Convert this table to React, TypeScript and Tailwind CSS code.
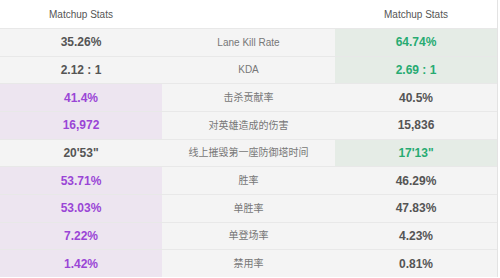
type Side = "left" | "right" | null;

type Row = {
  left: string;
  label: string;
  right: string;
  win: Side;
  kind: "purple" | "green";
};

const rows: Row[] = [
  { left: "35.26%", label: "Lane Kill Rate", right: "64.74%", win: "right", kind: "green" },
  { left: "2.12 : 1", label: "KDA", right: "2.69 : 1", win: "right", kind: "green" },
  { left: "41.4%", label: "击杀贡献率", right: "40.5%", win: "left", kind: "purple" },
  { left: "16,972", label: "对英雄造成的伤害", right: "15,836", win: "left", kind: "purple" },
  { left: "20'53\"", label: "线上摧毁第一座防御塔时间", right: "17'13\"", win: "right", kind: "green" },
  { left: "53.71%", label: "胜率", right: "46.29%", win: "left", kind: "purple" },
  { left: "53.03%", label: "单胜率", right: "47.83%", win: "left", kind: "purple" },
  { left: "7.22%", label: "单登场率", right: "4.23%", win: "left", kind: "purple" },
  { left: "1.42%", label: "禁用率", right: "0.81%", win: "left", kind: "purple" },
];

const ValueCell = ({ value, hl, kind }: { value: string; hl: boolean; kind: Row["kind"] }) => {
  const bg = hl ? (kind === "purple" ? "bg-[#ede5f0]" : "bg-[#e5ece6]") : "bg-[#f4f4f4]";
  const color = hl ? (kind === "purple" ? "text-[#9a45d6]" : "text-[#27ab72]") : "text-[#555555]";
  return (
    <div className={`w-[162px] flex items-center justify-center ${bg}`}>
      <span className={`text-[12px] font-bold ${color}`}>{value}</span>
    </div>
  );
};

export default function App() {
  return (
    <div className="w-[500px] h-[278px] bg-white overflow-hidden" style={{ fontFamily: '"Liberation Sans", Arial, "Noto Sans CJK SC", sans-serif' }}>
      <div className="w-[498px] border-r border-[#e3e3e3]">
        {/*==================== Header ====================*/}
        <div className="flex h-[28px] items-center bg-white text-[10px] text-[#555555]">
          <div className="w-[162px] text-center">Matchup Stats</div>
          <div className="w-[173px]" />
          <div className="w-[162px] text-center">Matchup Stats</div>
        </div>
        {/*==================== Rows ====================*/}
        {rows.map((r) => (
          <div key={r.label} className="flex h-[27.66px] border-t border-[#e8e8e8]">
            <ValueCell value={r.left} hl={r.win === "left"} kind={r.kind} />
            <div className="w-[173px] flex items-center justify-center bg-[#f4f4f4] text-[10px] text-[#777777]">
              {r.label}
            </div>
            <ValueCell value={r.right} hl={r.win === "right"} kind={r.kind} />
          </div>
        ))}
      </div>
    </div>
  );
}
